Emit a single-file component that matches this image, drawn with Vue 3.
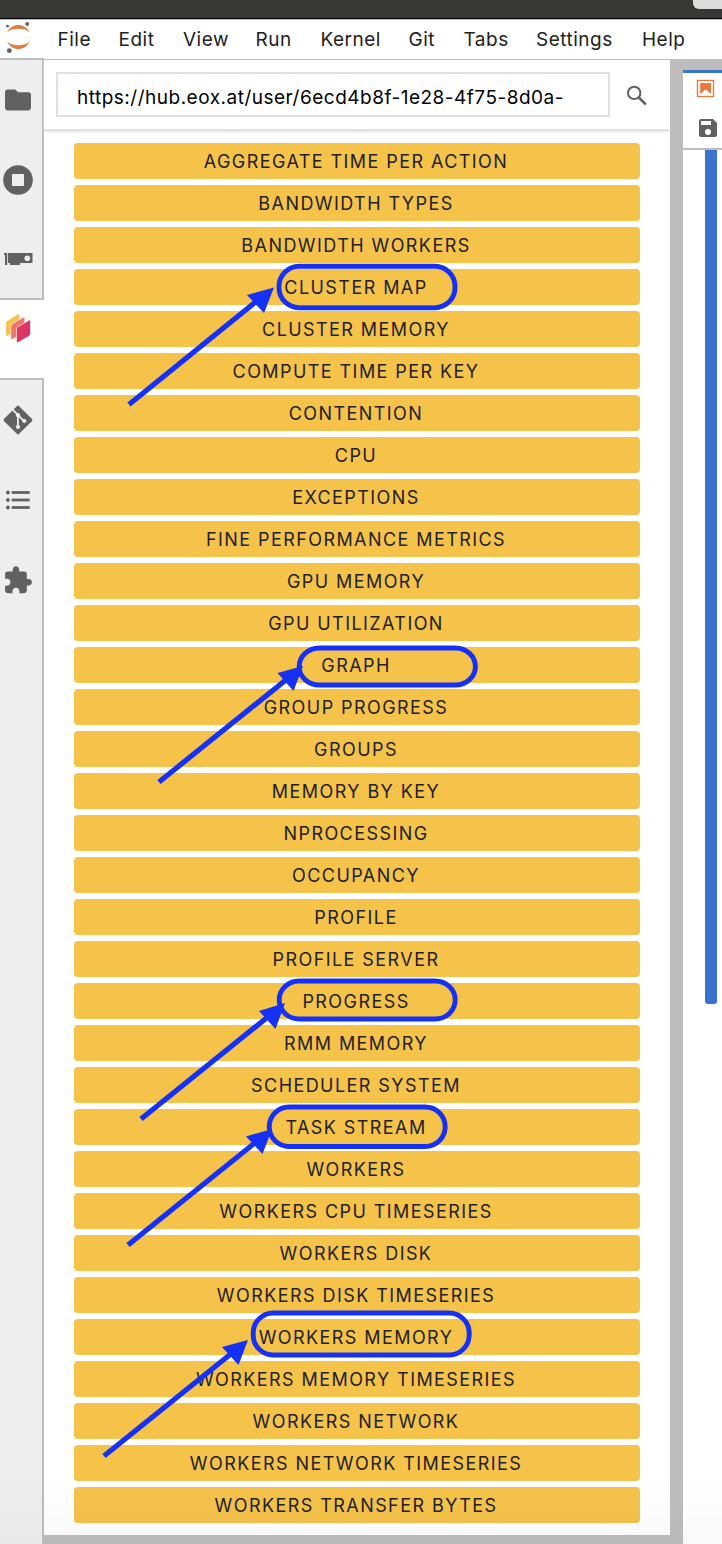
<script setup>
const menus = [
  { label: 'File', width: 61 }, { label: 'Edit', width: 64.5 }, { label: 'View', width: 72.5 },
  { label: 'Run', width: 65 }, { label: 'Kernel', width: 88 }, { label: 'Git', width: 55 },
  { label: 'Tabs', width: 72.5 }, { label: 'Settings', width: 106 }, { label: 'Help', width: 60 }
]
const plots = [
  'Aggregate Time Per Action', 'Bandwidth Types', 'Bandwidth Workers', 'Cluster Map',
  'Cluster Memory', 'Compute Time Per Key', 'Contention', 'CPU', 'Exceptions',
  'Fine Performance Metrics', 'GPU Memory', 'GPU Utilization', 'Graph', 'Group Progress',
  'Groups', 'Memory By Key', 'NProcessing', 'Occupancy', 'Profile', 'Profile Server',
  'Progress', 'RMM Memory', 'Scheduler System', 'Task Stream', 'Workers',
  'Workers CPU Timeseries', 'Workers Disk', 'Workers Disk Timeseries', 'Workers Memory',
  'Workers Memory Timeseries', 'Workers Network', 'Workers Network Timeseries',
  'Workers Transfer Bytes'
]
const marks = [
  { box: [279, 266.3, 176, 41.4], line: [129, 404.5, 258, 300], head: '274,287.5 247,295 264,313' },
  { box: [299.2, 648, 176.2, 37], line: [159, 782, 287, 679], head: '303,666 277.5,673 293.5,691' },
  { box: [279.2, 981, 176, 38], line: [141, 1119, 269, 1016], head: '285,1003 259,1011 275.5,1029' },
  { box: [269.2, 1107, 176, 39.5], line: [128, 1245, 256, 1142], head: '272,1129 246,1136.5 262.5,1154' },
  { box: [253.2, 1313, 216, 42], line: [104, 1456, 232, 1353], head: '248,1340 222,1347 238.5,1365' }
]
</script>

<template>
  <div class="app">
    <div class="titlebar"><i class="pill"></i></div>
    <header class="menubar">
      <svg class="logo" width="44" height="40" viewBox="0 20 44 40">
        <path fill="#e37c3c" d="M7 32.5C9.5 27.6 13.7 25 18.3 25S27.3 27.6 30 32.5C27 29.8 23 28.8 18.3 28.8S10 29.8 7 32.5ZM7 41.5C9.5 46.5 13.7 49 18.3 49S27.3 46.5 30 41.5C27 44.2 23 45.2 18.3 45.2S10 44.2 7 41.5Z" />
        <circle cx="27.2" cy="24" r="1.9" fill="#616161" />
        <circle cx="7.5" cy="26.2" r="1.4" fill="#616161" />
        <circle cx="9.3" cy="50.7" r="2.4" fill="#616161" />
      </svg>
      <nav class="menus">
        <span v-for="m in menus" :key="m.label" :style="{ width: m.width + 'px' }">{{ m.label }}</span>
      </nav>
    </header>
    <div class="body">
      <aside class="rail">
        <div class="tabs upper">
          <svg width="42" height="238" viewBox="0 60 42 238" fill="#616161">
            <path transform="translate(2.4 84.4) scale(1.3)" d="M10 4H4c-1.1 0-1.99.9-1.99 2L2 18c0 1.1.9 2 2 2h16c1.1 0 2-.9 2-2V8c0-1.1-.9-2-2-2h-8l-2-2z" />
            <circle cx="18" cy="180" r="14.8" />
            <rect x="12" y="174" width="12" height="12" rx=".8" fill="#eee" />
            <path d="M4 253H7.2V265H5V255H4ZM8 253H32.500V263H20V265H10V263H8Z" />
            <circle cx="27.3" cy="258.2" r="2.8" fill="#eee" />
          </svg>
        </div>
        <div class="active-tab">
          <svg width="44" height="78" viewBox="0 300 44 78">
            <g stroke="#fff" stroke-width=".6">
              <path fill="#f4c34b" d="M5.700 323.200Q5.700 321.700 7 320.900L17.700 314.300Q19.600 313.200 19.600 315.300V327.500Q19.600 329 18.300 329.800L7.700 336Q5.700 337.200 5.700 335Z" />
              <path fill="#ed7668" d="M10.800 326.300Q10.800 324.800 12.100 324L22.900 317.400Q24.800 316.300 24.800 318.400V330.600Q24.800 332.100 23.500 332.900L12.800 339.100Q10.800 340.300 10.800 338.100Z" />
              <path fill="#db3664" d="M16.500 329.300Q16.500 327.800 17.800 327L28.500 320.400Q30.500 319.300 30.500 321.400V333.800Q30.500 335.300 29.200 336.100L18.500 342.300Q16.500 343.500 16.500 341.300Z" />
            </g>
          </svg>
        </div>
        <div class="tabs lower">
          <svg width="42" height="240" viewBox="0 380 42 240" fill="#616161">
            <rect x="7.400" y="409.400" width="21.200" height="21.200" rx="1.6" transform="rotate(45 18 420)" />
            <path d="M12.8 409.8L17.9 414.9V427M18 415.2L24.3 421.3" fill="none" stroke="#eee" stroke-width="1.8" />
            <g fill="#eee"><circle cx="18" cy="415.2" r="2.1" /><circle cx="18" cy="427" r="2.1" /><circle cx="24.3" cy="421" r="2.1" /></g>
            <g v-for="y in [492.5, 500, 507.5]" :key="y"><circle cx="7.9" :cy="y" r="1.9" /><rect x="11.7" :y="y - 1.4" width="18" height="2.8" /></g>
            <path transform="translate(2.5 565) scale(1.28)" d="M20.5 11H19V7c0-1.1-.9-2-2-2h-4V3.500C13 2.120 11.880 1 10.500 1S8 2.120 8 3.500V5H4c-1.100 0-1.990.9-1.990 2v3.800H3.500c1.490 0 2.700 1.210 2.700 2.700s-1.210 2.700-2.700 2.700H2V20c0 1.100.9 2 2 2h3.800v-1.500c0-1.490 1.210-2.700 2.700-2.700 1.490 0 2.700 1.210 2.700 2.700V22H17c1.100 0 2-.9 2-2v-4h1.500c1.380 0 2.500-1.120 2.500-2.500S21.880 11 20.500 11z" />
          </svg>
        </div>
      </aside>
      <main class="panel">
        <div class="search">
          <div class="url">https://hub.eox.at/user/6ecd4b8f-1e28-4f75-8d0a-</div>
          <svg width="28" height="28" viewBox="0 0 28 28" fill="none" stroke="#616161">
            <circle cx="11.2" cy="10.9" r="6.2" stroke-width="2" /><path d="M15.800 15.500L22.800 22.500" stroke-width="2.500" />
          </svg>
        </div>
        <div class="list">
          <button v-for="p in plots" :key="p" class="plot">{{ p }}</button>
        </div>
      </main>
      <section class="dock">
        <div class="dockbar">
          <svg width="39" height="76" viewBox="683 73 39 76">
            <rect x="697.500" y="80.500" width="16" height="16" fill="none" stroke="#e37c3c" stroke-width="1.400" />
            <path fill="#e37c3c" d="M700.200 83H711V94L705.600 89.500L700.200 94Z" />
            <path fill="#616161" fill-rule="evenodd" d="M701 119H713L717 123V135Q717 137 715 137H701Q699 137 699 135V121Q699 119 701 119ZM701 121V125H711V121ZM708 128.800A3.100 3.100 0 1 0 708.010 128.800Z" />
          </svg>
        </div>
        <div class="cell"></div>
      </section>
    </div>
    <svg class="notes" width="722" height="1544" fill="none" stroke="#1531f5">
      <g v-for="m in marks" :key="m.head">
        <rect :x="m.box[0]" :y="m.box[1]" :width="m.box[2]" :height="m.box[3]" rx="20" stroke-width="4.900" />
        <line :x1="m.line[0]" :y1="m.line[1]" :x2="m.line[2]" :y2="m.line[3]" stroke-width="5.200" />
        <polygon :points="m.head" fill="#1531f5" stroke="none" />
      </g>
    </svg>
    <div class="shade"></div>
  </div>
</template>

<style>
body { margin: 0; overflow: hidden; }
</style>
<style scoped>
.app { position: relative; width: 722px; height: 1544px; overflow: hidden; display: flex; flex-direction: column; background: #fff; font-family: Inter, "Liberation Sans", sans-serif; }
.app * { box-sizing: border-box; }
svg { display: block; }
.titlebar { height: 20px; flex: none; background: #383836; border-bottom: 1px solid #bbb; box-shadow: inset 0 -1px #000; display: flex; justify-content: flex-end; }
.pill { width: 29px; height: 9px; background: #ddd; border-radius: 0 0 0 6px; }
.menubar { height: 40px; flex: none; display: flex; border-bottom: 1px solid #bdbdbd; }
.menus { display: flex; padding-left: 13.500px; }
.menus span { flex: none; font-size: 19px; line-height: 39px; letter-spacing: .5px; color: #212121; white-space: nowrap; }
.body { flex: 1; display: flex; min-height: 0; background: #bdbdbd; }
.rail { width: 44px; display: flex; flex-direction: column; flex: none; background: #fff; }
.tabs { background: #eee; border-right: 2px solid #bdbdbd; }
.upper { height: 240px; border-bottom: 2px solid #bdbdbd; box-shadow: 0 -2px #bdbdbd; }
.active-tab { height: 78px; }
.lower { flex: 1; border-top: 2px solid #bdbdbd; }
.panel { width: 626px; height: 1475px; border-right: 1px solid #fff; background: #fff; }
.search { height: 71px; padding: 12px 0 0 12px; display: flex; gap: 13px; border-bottom: 2px solid #e0e0e0; box-shadow: 0 1px 2px #e4e4e4; }
.search svg { margin-top: 10px; }
.url { width: 554px; height: 45px; border: 2px solid #e0e0e0; padding: 2px 0 0 19px; font-size: 19px; line-height: 43px; letter-spacing: .5px; color: #000; white-space: nowrap; }
.list { display: flex; flex-direction: column; gap: 6px; padding: 12px 29px 0 30px; }
.plot { height: 36px; width: 566px; border: 0; border-radius: 4px; padding: 2px 2px 0 0; background: #f5c24a; color: #212121; font: 400 18px/34px Inter, sans-serif; letter-spacing: 1.430px; text-transform: uppercase; white-space: nowrap; text-align: center; }
.dock { margin: 10px 0 0 13px; flex: 1; background: #fff; border-top: 3px solid #3a76d0; }
.dockbar { height: 77px; border-bottom: 2px solid #bdbdbd; }
.cell { width: 12px; height: 854px; margin-left: 22px; background: #3973cd; border-radius: 0 0 3px 3px; }
.notes { position: absolute; inset: 0; pointer-events: none; }
.shade { position: absolute; left: 0; right: 0; bottom: 0; height: 70px; background: linear-gradient(transparent, rgba(0, 0, 0, .025)); pointer-events: none; }
</style>
